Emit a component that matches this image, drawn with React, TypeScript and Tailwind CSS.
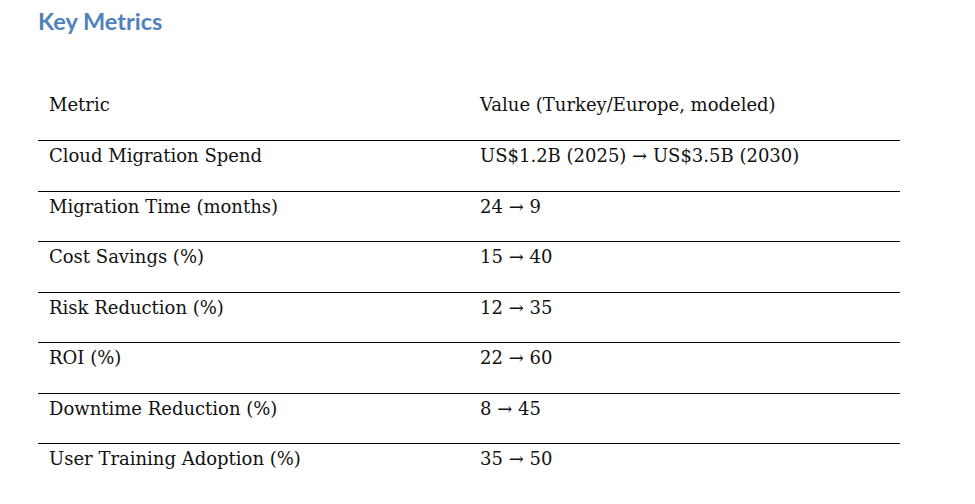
const rows: [string, string][] = [
  ['Cloud Migration Spend', 'US$1.2B (2025) → US$3.5B (2030)'],
  ['Migration Time (months)', '24 → 9'],
  ['Cost Savings (%)', '15 → 40'],
  ['Risk Reduction (%)', '12 → 35'],
  ['ROI (%)', '22 → 60'],
  ['Downtime Reduction (%)', '8 → 45'],
  ['User Training Adoption (%)', '35 → 50'],
];

export default function App() {
  return (
    <div className="h-[504px] w-[975px] overflow-hidden bg-white pl-[38px] pt-[6px]">
      <h2 className="font-['Lato','Liberation_Sans',sans-serif] text-[23.5px] leading-[30px] font-bold text-[#4f81bd]">
        Key Metrics
      </h2>
      <div className="mt-[53px] w-[862px] font-['DejaVu_Serif','Liberation_Serif',serif] text-[18px] text-[#111]">
        <div className="grid h-[51px] grid-cols-[431px_1fr] pt-[4px] leading-[24px]">
          <div className="pl-[11px]">Metric</div>
          <div className="pl-[11px]">Value (Turkey/Europe, modeled)</div>
        </div>
        {rows.map(([m, v]) => (
          <div
            key={m}
            className="grid h-[50.5px] grid-cols-[431px_1fr] border-t border-black pt-[3px] leading-[24px]">
            <div className="pl-[11px]">{m}</div>
            <div className="pl-[11px]">{v}</div>
          </div>
        ))}
      </div>
    </div>
  );
}
